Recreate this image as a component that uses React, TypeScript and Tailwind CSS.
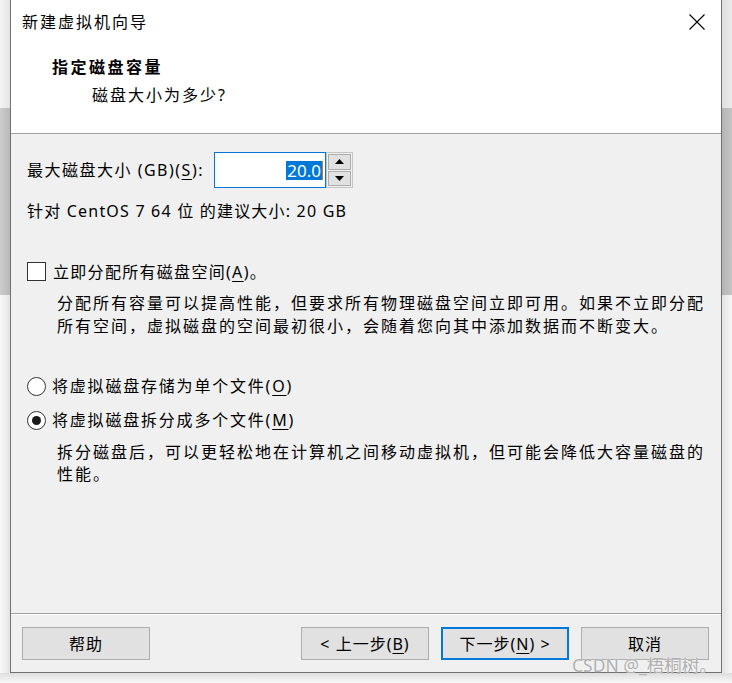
import React from "react";

const U = ({ c }: { c: string }) => (
  <span className="underline underline-offset-[3px] decoration-1">{c}</span>
);

const Btn = ({ children, primary }: { children: React.ReactNode; primary?: boolean }) => (
  <div
    className={
      primary
        ? "w-[128px] h-[33px] border-2 border-[#0078d7] bg-[#e1e1e1] text-[16px] tracking-[1px] flex items-center justify-center"
        : "w-[128px] h-[33px] border border-[#adadad] bg-[#e1e1e1] text-[16px] tracking-[1px] flex items-center justify-center"
    }
  >
    {children}
  </div>
);

export default function App() {
  return (
    <div className="relative w-[732px] h-[683px] overflow-hidden bg-[#f6f6f6] font-['Noto_Sans','Noto_Sans_CJK_SC',sans-serif] text-black">
      <div className="flex h-[673px]">
        {/* left backdrop strip */}
        <div className="w-[10px] flex flex-col">
          <div className="h-[108px] bg-gradient-to-r from-[#f4f4f4] to-[#e3e3e3]" />
          <div className="h-[187px] bg-gradient-to-r from-[#cdcdcd] to-[#b8b8b8]" />
          <div className="flex-1 bg-gradient-to-r from-[#f9f9f9] to-[#e4e4e4]" />
        </div>

        {/* dialog window */}
        <div className="w-[712px] flex flex-col border-x border-b border-[#707070] bg-[#f0f0f0]">
          <div className="h-[134px] bg-white border-b border-[#a0a0a0] flex flex-col">
            <div className="h-[44px] flex items-center justify-between pl-[11px] pr-[16px]">
              <span className="text-[16px] leading-[20px] tracking-[2px]">新建虚拟机向导</span>
              <svg width="16" height="16" viewBox="0 0 16 16">
                <path d="M0.5 0.5 L15.5 15.5 M15.5 0.5 L0.5 15.5" stroke="#000" strokeWidth="1.1" fill="none" />
              </svg>
            </div>
            <div className="mt-[13px] pl-[41px] text-[16px] leading-[20px] font-bold tracking-[2.5px]">指定磁盘容量</div>
            <div className="mt-[8px] pl-[81px] text-[16px] leading-[20px] tracking-[2px]">磁盘大小为多少?</div>
          </div>

          <div className="flex-1 flex flex-col pl-[16px]">
            <div className="mt-[18px] h-[36px] flex items-center">
              <div className="w-[187px] text-[16px] leading-[20px] tracking-[1.5px]">
                最大磁盘大小 (GB)(<U c="S" />):
              </div>
              <div className="w-[112px] h-[36px] border border-[#0078d7] bg-white flex items-center justify-end pr-[2px]">
                <span className="bg-[#0078d7] text-white text-[17px] leading-[19px] px-[1px]">20.0</span>
                <span className="w-[1px] h-[19px] bg-[#e07020]" />
              </div>
              <div className="w-[27px] h-[36px] border border-[#c4c4c4] bg-[#f0f0f0] p-[1px] flex flex-col gap-[1px]">
                <div className="flex-1 border border-[#adadad] bg-[#e1e1e1] flex items-center justify-center">
                  <svg width="9" height="5" viewBox="0 0 9 5"><path d="M0 5 L4.5 0 L9 5 Z" fill="#000" /></svg>
                </div>
                <div className="flex-1 border border-[#adadad] bg-[#e1e1e1] flex items-center justify-center">
                  <svg width="9" height="5" viewBox="0 0 9 5"><path d="M0 0 L9 0 L4.5 5 Z" fill="#000" /></svg>
                </div>
              </div>
            </div>

            <div className="mt-[13px] h-[20px] flex items-center text-[16px] tracking-[1.2px]">
              针对 CentOS 7 64 位 的建议大小: 20 GB
            </div>

            <div className="mt-[41px] h-[19px] flex items-center gap-[7px]">
              <div className="w-[19px] h-[19px] border border-[#333333] bg-white" />
              <span className="text-[16px] leading-[20px] tracking-[1.3px]">
                立即分配所有磁盘空间(<U c="A" />)。
              </span>
            </div>

            <div className="mt-[11px] pl-[30px] text-[16px] leading-[23px] tracking-[2px]">
              分配所有容量可以提高性能，但要求所有物理磁盘空间立即可用。如果不立即分配
              <br />
              所有空间，虚拟磁盘的空间最初很小，会随着您向其中添加数据而不断变大。
            </div>

            <div className="mt-[38px] h-[20px] flex items-center gap-[6px]">
              <div className="w-[19px] h-[19px] rounded-full border border-[#333333] bg-white" />
              <span className="text-[16px] leading-[20px] tracking-[1.8px]">
                将虚拟磁盘存储为单个文件(<U c="O" />)
              </span>
            </div>

            <div className="mt-[14px] h-[20px] flex items-center gap-[6px]">
              <div className="w-[19px] h-[19px] rounded-full border border-[#333333] bg-white flex items-center justify-center">
                <div className="w-[9px] h-[9px] rounded-full bg-[#1a1a1a]" />
              </div>
              <span className="text-[16px] leading-[20px] tracking-[1.8px]">
                将虚拟磁盘拆分成多个文件(<U c="M" />)
              </span>
            </div>

            <div className="mt-[11px] pl-[30px] text-[16px] leading-[22px] tracking-[2px]">
              拆分磁盘后，可以更轻松地在计算机之间移动虚拟机，但可能会降低大容量磁盘的
              <br />
              性能。
            </div>
          </div>

          <div className="h-[59px] border-t border-[#a0a0a0] shadow-[inset_0_1px_0_#ffffff] pt-[13px] pl-[11px] pr-[12px] flex items-start">
            <Btn>帮助</Btn>
            <div className="ml-auto flex gap-[12px]">
              <Btn>
                &lt; 上一步(<U c="B" />)
              </Btn>
              <Btn primary>
                下一步(<U c="N" />) &gt;
              </Btn>
              <Btn>取消</Btn>
            </div>
          </div>
        </div>

        {/* right backdrop strip */}
        <div className="w-[10px] flex flex-col">
          <div className="h-[108px] bg-gradient-to-r from-[#dedede] to-[#ececec]" />
          <div className="h-[187px] bg-gradient-to-r from-[#b4b4b4] to-[#c6c6c6]" />
          <div className="flex-1 bg-gradient-to-r from-[#e2e2e2] to-[#f6f6f6]" />
        </div>
      </div>
      <div className="h-[10px] bg-gradient-to-b from-[#dedede] to-[#f8f8f8]" />

      <div className="absolute left-[572px] top-[654px] text-[17.5px] leading-[22px] text-[#b0b0b0] [text-shadow:0_0_1px_#ffffff]">
        CSDN @_梧桐树。
      </div>
    </div>
  );
}
